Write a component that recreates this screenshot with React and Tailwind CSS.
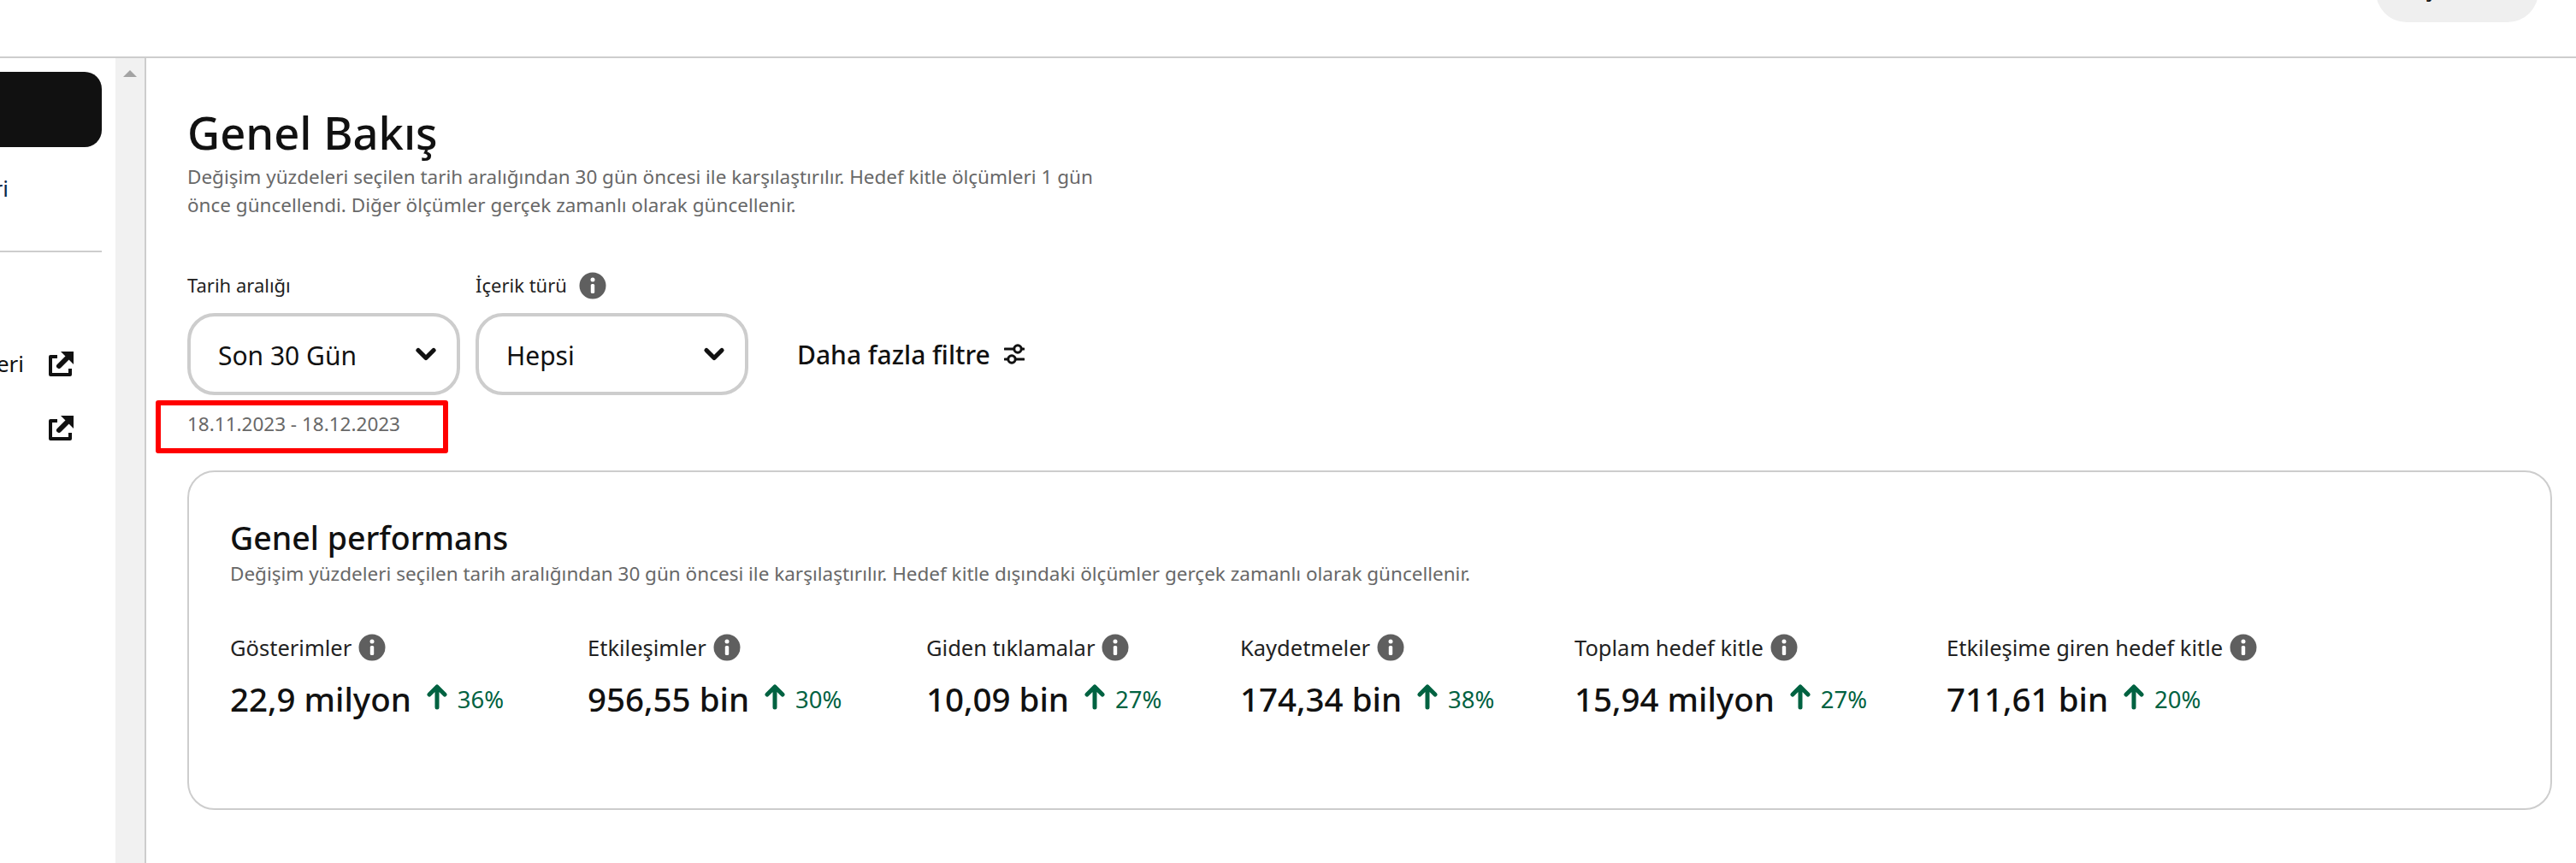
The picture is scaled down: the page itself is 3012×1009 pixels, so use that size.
import React from 'react';
import { ChevronDown } from 'lucide-react';

const metrics = [
  { label: 'Gösterimler', value: '22,9 milyon', pct: '36%', width: 'w-[418px]' },
  { label: 'Etkileşimler', value: '956,55 bin', pct: '30%', width: 'w-[396px]' },
  { label: 'Giden tıklamalar', value: '10,09 bin', pct: '27%', width: 'w-[367px]' },
  { label: 'Kaydetmeler', value: '174,34 bin', pct: '38%', width: 'w-[391px]' },
  { label: 'Toplam hedef kitle', value: '15,94 milyon', pct: '27%', width: 'w-[435px]' },
  { label: 'Etkileşime giren hedef kitle', value: '711,61 bin', pct: '20%', width: 'w-[400px]' }
];

const InfoIcon = () => (
  <svg width="32" height="32" viewBox="0 0 32 32" className="shrink-0">
    <circle cx="16" cy="16" r="15.5" fill="#5f5f5f" />
    <circle cx="16" cy="9" r="2.5" fill="#fff" />
    <rect x="13.8" y="14" width="4.4" height="11" rx="1.6" fill="#fff" />
  </svg>
);

const UpArrow = () => (
  <svg width="24" height="30" viewBox="0 0 24 30" className="shrink-0">
    <path d="M12 3 L12 27 M3 12 L12 3 L21 12" fill="none" stroke="#006241" strokeWidth="5" strokeLinecap="round" strokeLinejoin="round" />
  </svg>
);

const ExternalIcon = () => (
  <svg width="29" height="30" viewBox="0 0 29 30" className="shrink-0">
    <path d="M10 7 H2 V28 H25 V21" fill="none" stroke="#111" strokeWidth="4" strokeLinejoin="round" />
    <path d="M12 18 L21 9" fill="none" stroke="#111" strokeWidth="6" strokeLinecap="round" />
    <path d="M14 1 H29 V16 Z" fill="#111" />
  </svg>
);

const FilterIcon = () => (
  <svg width="24" height="24" viewBox="0 0 24 24" className="shrink-0">
    <path d="M1 6 H23 M1 18 H23" stroke="#111" strokeWidth="3" strokeLinecap="round" />
    <circle cx="16" cy="6" r="4.2" fill="#fff" stroke="#111" strokeWidth="3" />
    <circle cx="9" cy="18" r="4.2" fill="#fff" stroke="#111" strokeWidth="3" />
  </svg>
);

const Select = ({ label, value, info }) => (
  <div className="flex flex-col">
    <div className="flex items-center gap-[14px] h-[33px] text-[22px] text-[#222]">
      {label}
      {info && <InfoIcon />}
    </div>
    <div className="mt-[16px] w-[319px] h-[96px] border-4 border-[#cdcdcd] rounded-[32px] flex items-center justify-between pl-[32px] pr-[18px] text-[30px] text-[#111]">
      <span className="pt-[2px]">{value}</span>
      <ChevronDown size={36} strokeWidth={3.5} color="#111" />
    </div>
  </div>
);

export default function App() {
  return (
    <div className="w-[3012px] h-[1009px] overflow-hidden bg-white flex flex-col font-['Noto_Sans','Open_Sans',sans-serif]">
      <header className="h-[68px] shrink-0 border-b-2 border-[#cdcdcd] flex justify-end pr-[44px]">
        <div className="w-[190px] h-[96px] mt-[-70px] pt-[12px] rounded-[36px] bg-[#efefef] flex items-center justify-center text-[28px] font-medium text-[#111]">
          Dışa aktar
        </div>
      </header>

      <div className="flex-1 flex min-h-0">
        <aside className="w-[135px] shrink-0 overflow-hidden pt-[16px]">
          <div className="w-[119px] h-[88px] bg-[#111] rounded-r-[20px]" />
          <div className="w-[119px] pt-[28px] border-b-2 border-[#cdcdcd] pb-[53px]">
            <div className="flex justify-end w-[10px] overflow-hidden text-[26px] text-[#0a2a4a] leading-[40px]">
              <span className="whitespace-nowrap">içgörüleri</span>
            </div>
          </div>
          <div className="w-[119px] mt-[113px] flex items-center justify-between h-[34px]">
            <div className="flex justify-end w-[28px] overflow-hidden text-[26px] text-[#111] leading-[40px]">
              <span className="whitespace-nowrap">içgörüleri</span>
            </div>
            <div className="mr-[33px]"><ExternalIcon /></div>
          </div>
          <div className="w-[119px] mt-[43px] flex justify-end h-[34px]">
            <div className="mr-[33px]"><ExternalIcon /></div>
          </div>
        </aside>

        <div className="w-[36px] shrink-0 bg-[#f1f1f1] border-r-2 border-[#cdcdcd] pt-[14px] pl-[9px]">
          <div className="w-0 h-0 border-x-[8px] border-x-transparent border-b-[8px] border-b-[#a3a3a3]" />
        </div>

        <main className="flex-1 relative pl-[48px] pr-[28px] pt-[52px]">
          <h1 className="text-[52.5px] leading-[70px] font-medium text-[#111]">Genel Bakış</h1>
          <p className="w-[1075px] text-[22.5px] leading-[33px] text-[#686868]">
            Değişim yüzdeleri seçilen tarih aralığından 30 gün öncesi ile karşılaştırılır. Hedef kitle ölçümleri 1 gün önce güncellendi. Diğer ölçümler gerçek zamanlı olarak güncellenir.
          </p>

          <div className="mt-[61px] flex items-end gap-[18px]">
            <Select label="Tarih aralığı" value="Son 30 Gün" />
            <Select label="İçerik türü" value="Hepsi" info />
            <div className="h-[96px] ml-[39px] flex items-center gap-[16px] text-[30px] font-medium text-[#111]">
              Daha fazla filtre
              <FilterIcon />
            </div>
          </div>

          <div className="mt-[17px] h-[33px] text-[22.5px] leading-[33px] text-[#686868]">18.11.2023 - 18.12.2023</div>

          {/* annotation drawn over the page */}
          <div className="absolute left-[11px] top-[400px] w-[342px] h-[62px] border-[6px] border-[#ff0000] rounded-[3px]" />

          <section className="mt-[38px] h-[397px] border-2 border-[#cdcdcd] rounded-[32px] pl-[48px] pt-[52px]">
            <h2 className="text-[37.5px] leading-[50px] font-medium text-[#111]">Genel performans</h2>
            <p className="text-[22.5px] leading-[33px] text-[#686868]">
              Değişim yüzdeleri seçilen tarih aralığından 30 gün öncesi ile karşılaştırılır. Hedef kitle dışındaki ölçümler gerçek zamanlı olarak güncellenir.
            </p>
            <div className="mt-[52px] flex">
              {metrics.map((m) => (
                <div key={m.label} className={`flex flex-col shrink-0 ${m.width}`}>
                  <div className="flex items-center gap-[8px] h-[36px] text-[25.5px] text-[#222]">
                    {m.label}
                    <InfoIcon />
                  </div>
                  <div className="mt-[18px] flex items-center h-[50px]">
                    <span className="text-[38.5px] font-medium text-[#111]">{m.value}</span>
                    <div className="ml-[18px] mt-[-6px]"><UpArrow /></div>
                    <span className="ml-[12px] text-[27.5px] text-[#006241]">{m.pct}</span>
                  </div>
                </div>
              ))}
            </div>
          </section>
        </main>
      </div>
    </div>
  );
}
